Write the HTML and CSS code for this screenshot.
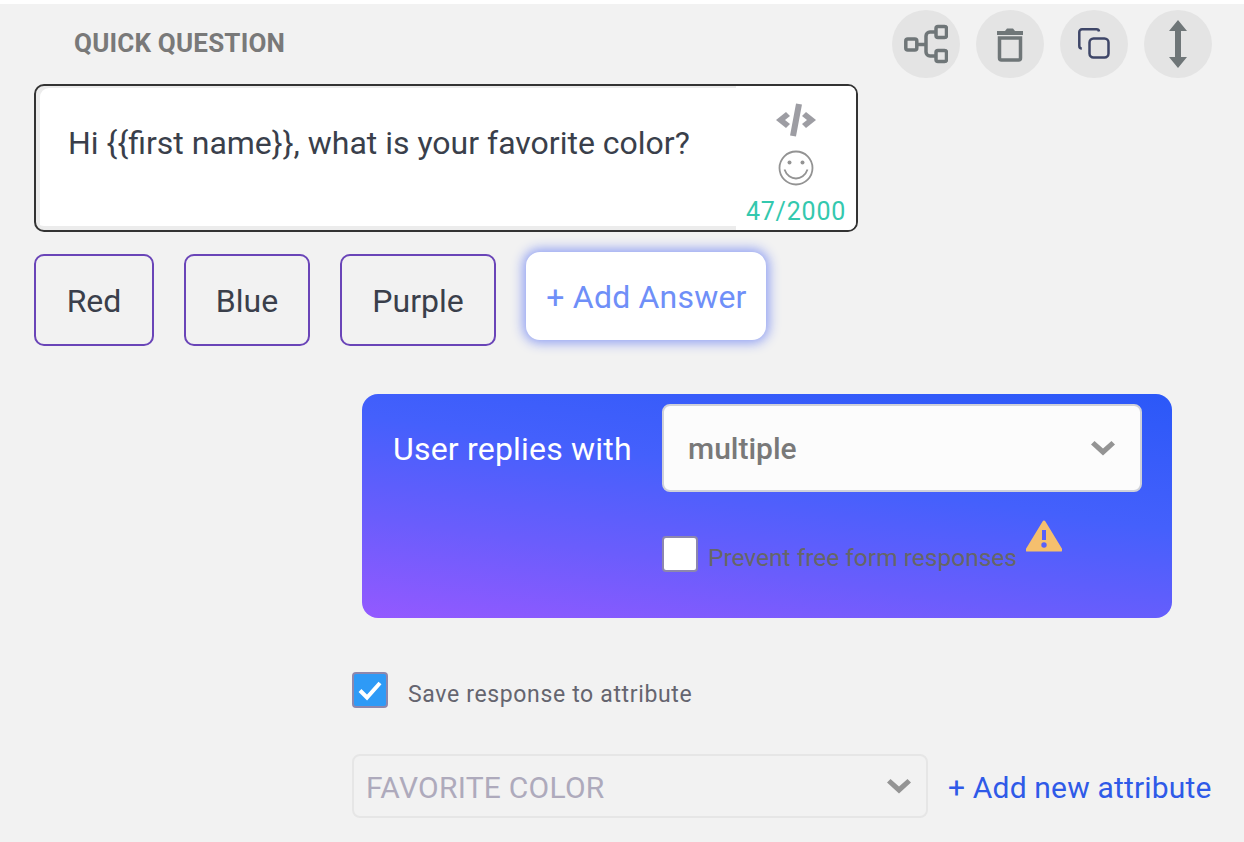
FILE: index.html
```html
<!DOCTYPE html>
<html lang="en">
<head>
<meta charset="UTF-8">
<title>Quick Question</title>
<link rel="stylesheet" href="styles.css">
</head>
<body>
<div class="card">
  <div class="card-head">
    <h2 class="card-title">QUICK QUESTION</h2>
    <div class="tools">
      <span class="tool">
        <svg width="44" height="40" viewBox="0 0 44 40" fill="none" stroke="#6f7678" stroke-width="3.500">
          <rect x="1.800" y="15" width="11" height="11" rx="2"/>
          <rect x="32" y="2.500" width="10.500" height="11" rx="2"/>
          <rect x="32" y="26.500" width="10.500" height="11" rx="2"/>
          <path d="M13 20.500h9M32 8h-6a4 4 0 0 0-4 4v16a4 4 0 0 0 4 4h6"/>
        </svg>
      </span>
      <span class="tool">
        <svg width="28" height="38" viewBox="0 0 28 38" fill="none">
          <path d="M1 6h26v4H1zM9 6l2-2.500h6L19 6z" fill="#6f7678"/>
          <path d="M3.500 13h21v20a2 2 0 0 1-2 2h-17a2 2 0 0 1-2-2z" stroke="#6f7678" stroke-width="3.500"/>
        </svg>
      </span>
      <span class="tool">
        <svg width="32" height="32" viewBox="0 0 32 32" fill="none" stroke="#3e4668" stroke-width="2.500">
          <path d="M21 3.500a2.500 2.500 0 0 0-2.500-2.200H4a2.700 2.700 0 0 0-2.700 2.700v14a2.500 2.500 0 0 0 2.500 2.500"/>
          <rect x="11.500" y="10.500" width="19" height="19" rx="4"/>
        </svg>
      </span>
      <span class="tool">
        <svg width="20" height="50" viewBox="0 0 20 50">
          <path d="M10 1l9 11h-6v26h6L10 49 1 38h6V12H1z" fill="#6f7678"/>
        </svg>
      </span>
    </div>
  </div>

  <div class="message">
    <p class="message-text">Hi {{first name}}, what is your favorite color?</p>
    <div class="message-side">
      <svg class="code-icon" width="40" height="34" viewBox="0 0 40 34">
        <path d="M10 9l4 4-5 4 5 4-4 4-10-8zM30 9l-4 4 5 4-5 4 4 4 10-8z" fill="#9d9da3"/>
        <path d="M23 1l-6 32" stroke="#9d9da3" stroke-width="6" fill="none"/>
      </svg>
      <svg class="smile-icon" width="36" height="36" viewBox="0 0 36 36" fill="none" stroke="#939393" stroke-width="1.800">
        <circle cx="18" cy="18" r="16.500"/>
        <circle cx="11.500" cy="12.500" r="2" fill="#939393" stroke="none"/>
        <circle cx="24.500" cy="12.500" r="2" fill="#939393" stroke="none"/>
        <path d="M6.500 19.500c2 6 7 9 11.500 9s9.500-3 11.500-9"/>
      </svg>
      <span class="counter">47/2000</span>
    </div>
  </div>

  <div class="answers">
    <span class="answer answer-red">Red</span>
    <span class="answer answer-blue">Blue</span>
    <span class="answer answer-purple">Purple</span>
    <span class="add-answer">+ Add Answer</span>
  </div>

  <div class="replies">
    <div class="replies-top">
      <span class="replies-label">User replies with</span>
      <div class="select select-white">
        <span>multiple</span>
        <svg width="24" height="16" viewBox="0 0 24 16"><path d="M3.500 1L12 8.500 20.500 1 24 4.500 12 15.500 0 4.500z" fill="#949494"/></svg>
      </div>
    </div>
    <div class="replies-bottom">
      <span class="box"></span>
      <span class="prevent">Prevent free form responses</span>
      <svg class="warn" width="36" height="32" viewBox="0 0 36 32">
        <path d="M18 2L35 30H1z" fill="#f5bf6e" stroke="#f5bf6e" stroke-width="3" stroke-linejoin="round"/>
        <path d="M16 10h4v10h-4z" fill="#5a60fb"/>
        <circle cx="18" cy="25" r="2.700" fill="#5a60fb"/>
      </svg>
    </div>
  </div>

  <div class="save-row">
    <span class="box box-on">
      <svg width="28" height="24" viewBox="0 0 28 24" fill="none"><path d="M4 12.500l7 7L24 5" stroke="#fff" stroke-width="4"/></svg>
    </span>
    <span class="save-label">Save response to attribute</span>
  </div>

  <div class="attr-row">
    <div class="select select-attr">
      <span>FAVORITE COLOR</span>
      <svg width="24" height="16" viewBox="0 0 24 16"><path d="M3.500 1L12 8.500 20.500 1 24 4.500 12 15.500 0 4.500z" fill="#949494"/></svg>
    </div>
    <span class="add-attr">+ Add new attribute</span>
  </div>
</div>
</body>
</html>
```

FILE: styles.css
```css
html, body {
  margin: 0;
  background: #fff;
}

body {
  padding-top: 4px;
  font-family: Roboto, "Liberation Sans", sans-serif;
}

.card {
  box-sizing: border-box;
  width: 1244px;
  height: 838px;
  padding: 6px 32px 0 34px;
  background: #f2f2f2;
}

/* header */
.card-head {
  display: flex;
  justify-content: space-between;
  height: 74px;
}

.card-title {
  margin: 15px 0 0 40px;
  font-size: 26px;
  line-height: 36px;
  font-weight: 700;
  letter-spacing: 0.2px;
  color: #797979;
}

.tools {
  display: flex;
  gap: 16px;
}

.tool {
  display: flex;
  align-items: center;
  justify-content: center;
  width: 68px;
  height: 68px;
  border-radius: 50%;
  background: #e4e4e4;
}

/* message box */
.message {
  box-sizing: border-box;
  display: flex;
  justify-content: space-between;
  width: 824px;
  height: 148px;
  border: 2px solid #333;
  border-radius: 10px;
  background: #fff;
  box-shadow: inset 5px 3px 0 -1px #ececec, inset 0 -4px 0 #ececec;
}

.message-text {
  margin: 37px 0 0 32px;
  font-size: 32px;
  line-height: 40px;
  color: #3a3f4b;
}

.message-side {
  display: flex;
  flex-direction: column;
  align-items: center;
  width: 120px;
  background: #fff;
  border-radius: 0 8px 8px 0;
}

.code-icon {
  margin-top: 17px;
}

.smile-icon {
  margin-top: 13px;
}

.counter {
  margin-top: 11px;
  font-size: 25px;
  line-height: 30px;
  letter-spacing: 0.8px;
  color: #34c8ae;
}

/* answers */
.answers {
  display: flex;
  align-items: flex-start;
  gap: 30px;
  margin-top: 20px;
}

.answer {
  box-sizing: border-box;
  display: flex;
  align-items: center;
  justify-content: center;
  margin-top: 2px;
  padding-top: 2px;
  height: 92px;
  border: 2px solid #6a45b8;
  border-radius: 10px;
  font-size: 32px;
  color: #3a3f4b;
}

.answer-red { width: 120px; }
.answer-blue { width: 126px; }
.answer-purple { width: 156px; }

.add-answer {
  box-sizing: border-box;
  display: flex;
  align-items: center;
  justify-content: center;
  width: 240px;
  height: 88px;
  padding: 2px 0 0 1px;
  border-radius: 14px;
  background: #fff;
  box-shadow: 0 0 12px 3px #8f9ff3;
  font-size: 32px;
  letter-spacing: 0.2px;
  color: #6f8ff8;
}

/* blue panel */
.replies {
  box-sizing: border-box;
  width: 810px;
  height: 224px;
  margin: 48px 0 0 328px;
  padding: 10px 30px 0 31px;
  border-radius: 16px;
  background: linear-gradient(188deg, #2b58f8 0%, #4460fc 40%, #6a5dfc 70%, #9459ff 100%);
}

.replies-top {
  display: flex;
  align-items: center;
  justify-content: space-between;
}

.replies-label {
  padding-top: 2px;
  font-size: 32px;
  letter-spacing: 0.2px;
  color: #fff;
}

.select {
  box-sizing: border-box;
  display: flex;
  align-items: center;
  justify-content: space-between;
  border-radius: 8px;
}

.select-white {
  width: 480px;
  height: 88px;
  padding: 0 25px 0 24px;
  border: 2px solid #cfd1d9;
  background: #fcfcfc;
  font-size: 30px;
  font-weight: 500;
  color: #797979;
}

.replies-bottom {
  display: flex;
  align-items: flex-start;
  margin: 44px 0 0 269px;
}

.box {
  box-sizing: border-box;
  display: flex;
  align-items: center;
  justify-content: center;
  flex: none;
  width: 36px;
  height: 36px;
  border: 2px solid #8d87ad;
  border-radius: 4px;
  background: #fff;
}

.box-on {
  background: #2e9af6;
}

.prevent {
  margin: 7px 0 0 10px;
  font-size: 24.500px;
  line-height: 30px;
  color: #666;
}

.warn {
  margin: -16px 0 0 9px;
}

/* attribute */
.save-row {
  display: flex;
  align-items: center;
  margin: 54px 0 0 318px;
}

.save-label {
  margin: 8px 0 0 20px;
  font-size: 23px;
  letter-spacing: 0.65px;
  color: #65656f;
}

.attr-row {
  display: flex;
  align-items: center;
  margin: 46px 0 0 318px;
}

.select-attr {
  width: 576px;
  height: 64px;
  padding: 0 15px 0 12px;
  border: 2px solid #e6e6e6;
  font-size: 30px;
  letter-spacing: 0.25px;
  color: #aeaabc;
}

.select-attr span {
  padding-top: 2px;
}

.add-attr {
  margin-left: 20px;
  padding-top: 2px;
  font-size: 30px;
  letter-spacing: 0.17px;
  color: #2f5ae8;
}
```
